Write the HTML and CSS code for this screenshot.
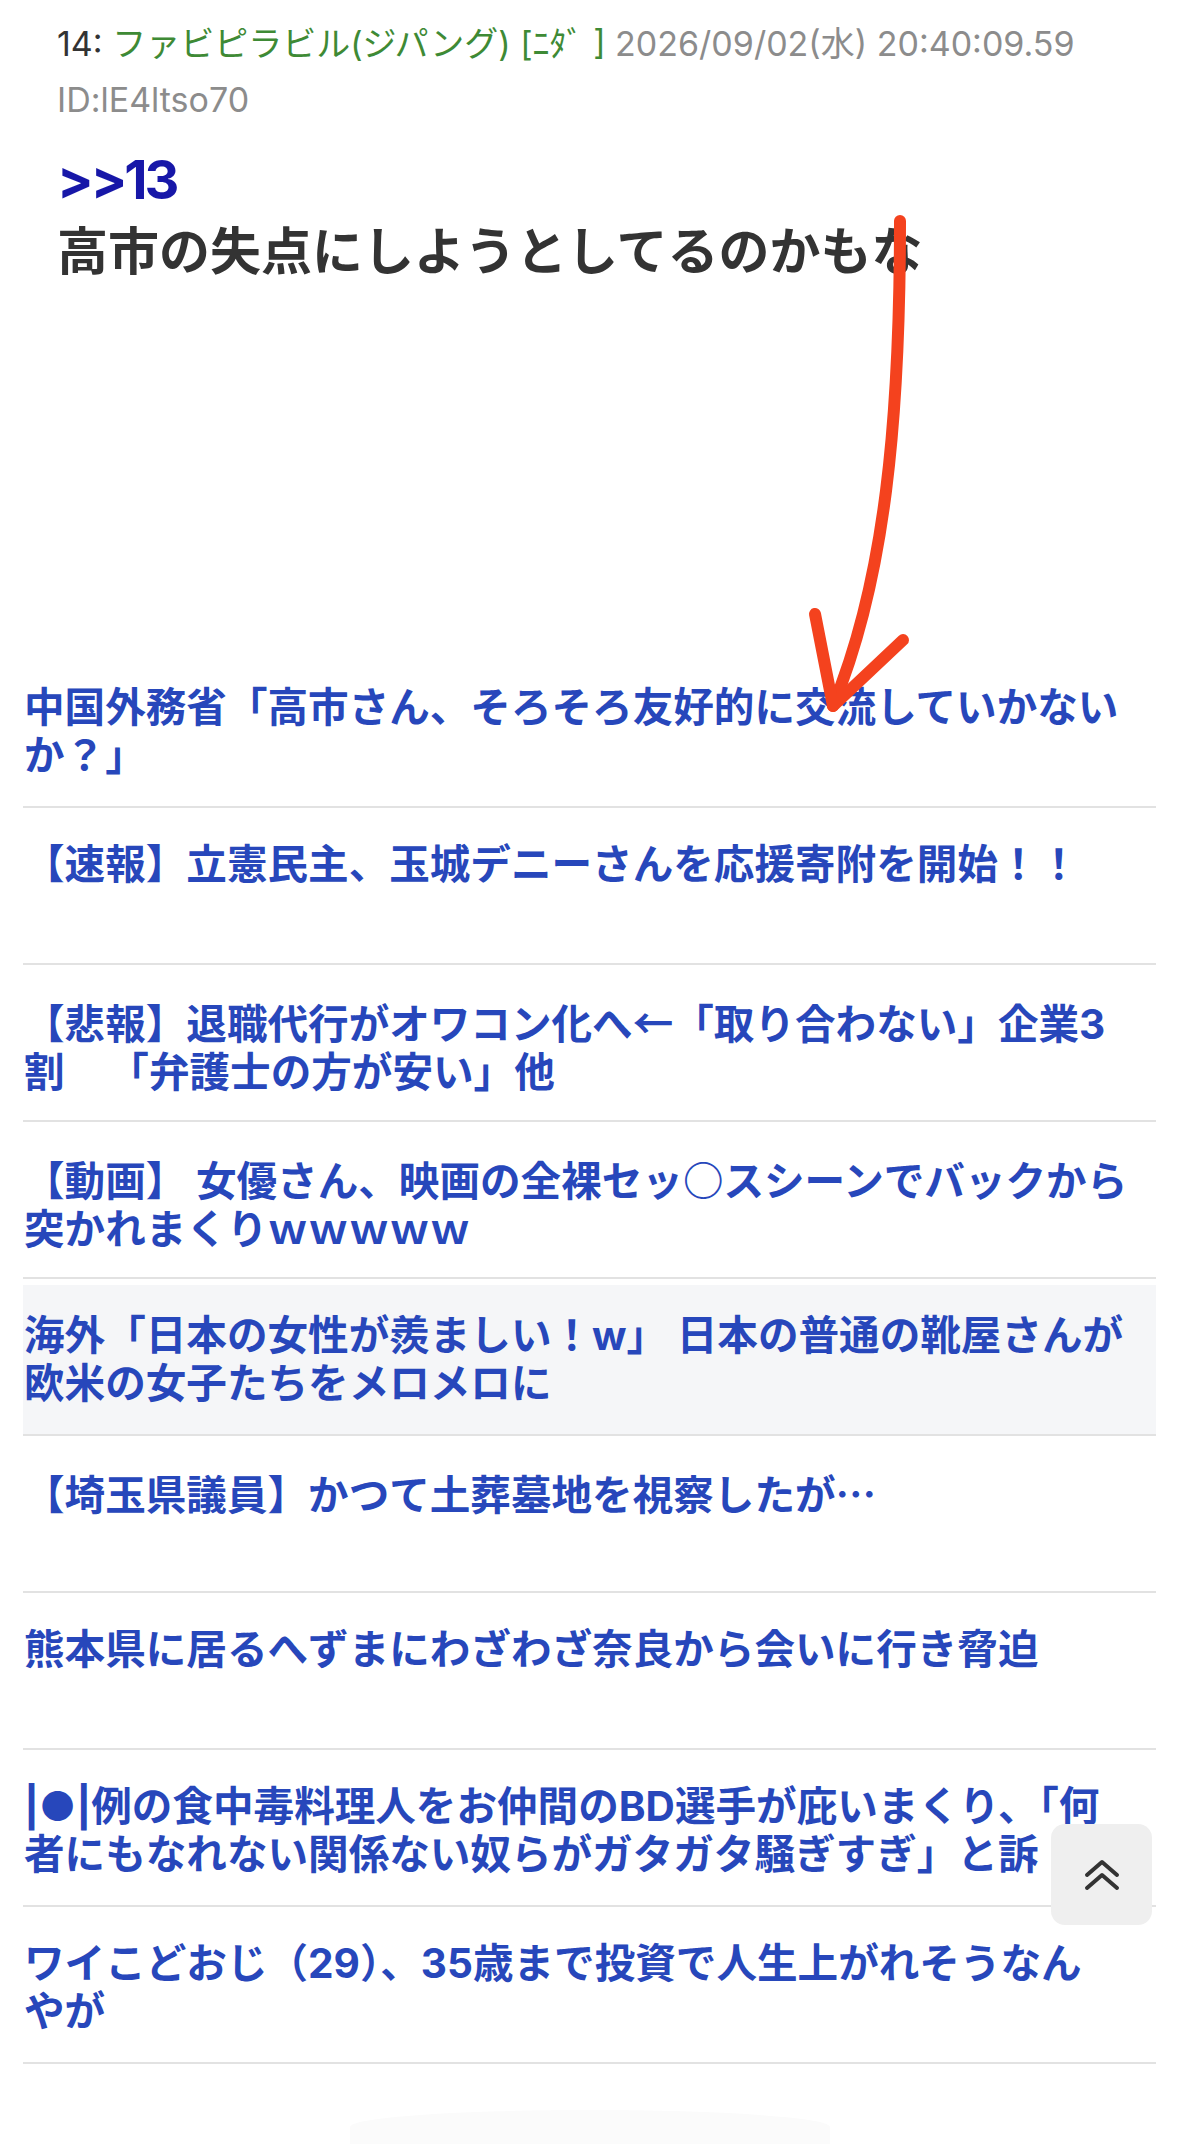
FILE: index.html
```html
<!DOCTYPE html>
<html lang="ja">
<head>
  <meta charset="UTF-8" />
  <meta name="viewport" content="width=device-width, initial-scale=1.0" />
  <title>14: ファビピラビル(ジパング)</title>
  <link rel="stylesheet" href="styles.css">
</head>
<body>
<div id="page">
  <div class="post">
    <div class="post-head">
      <div class="meta">14: <span class="name">ファビピラビル(ジパング) [ﾆﾀﾞ ]</span> <span class="date">2026/09/02(水) 20:40:09.59</span></div>
      <div class="uid">ID:lE4ltso70</div>
    </div>
    <div class="post-body">
      <a class="anchor" href="#">&gt;&gt;13</a><br>
      高市の失点にしようとしてるのかもな
    </div>
    <div class="ad-space"></div>
  </div>

  <ul class="links">
    <li class="item"><a href="#">中国外務省「高市さん、そろそろ友好的に交流していかない<br>か？」</a></li>
    <li class="item"><a href="#">【速報】立憲民主、玉城デニーさんを応援寄附を開始！！</a></li>
    <li class="item"><a href="#">【悲報】退職代行がオワコン化へ<span class="jp">←</span>「取り合わない」企業3<br>割　&#8202;「弁護士の方が安い」他</a></li>
    <li class="item"><a href="#">【動画】 女優さん、映画の全裸セッ<span class="jp">○</span>スシーンでバックから<br>突かれまくりｗｗｗｗｗ</a></li>
    <li class="item alt"><a href="#">海外「日本の女性が羨ましい！w」 日本の普通の靴屋さんが<br>欧米の女子たちをメロメロに</a></li>
    <li class="item"><a href="#">【埼玉県議員】かつて土葬墓地を視察したが<span class="jp">…</span></a></li>
    <li class="item"><a href="#">熊本県に居るへずまにわざわざ奈良から会いに行き脅迫</a></li>
    <li class="item"><a class="clamp" href="#">|●|例の食中毒料理人をお仲間のBD選手が庇いまくり、「何<br>者にもなれない関係ない奴らがガタガタ騒ぎすぎ」と訴</a></li>
    <li class="item"><a href="#">ワイこどおじ（29）、35歳まで投資で人生上がれそうなん<br>やが</a></li>
  </ul>
  <div class="page-end"></div>

  <!-- hand drawn annotation -->
  <svg class="scribble" width="1179" height="2144" viewBox="0 0 1179 2144">
    <path d="M900 221 C900 420 885 580 833 706" fill="none" stroke="#f4421e" stroke-width="12" stroke-linecap="round"/>
    <path d="M815 614 L833 706 L903 640" fill="none" stroke="#f4421e" stroke-width="12" stroke-linecap="round" stroke-linejoin="round"/>
  </svg>
</div>

<a id="toTop" href="#">
  <svg width="36" height="34" viewBox="0 0 36 34">
    <path d="M3 17 L18 4 L33 17 M3 30 L18 17 L33 30" fill="none" stroke="#333" stroke-width="4" stroke-linecap="round" stroke-linejoin="round"/>
  </svg>
</a>
</body>
</html>
```

FILE: styles.css
```css
* { box-sizing: border-box; margin: 0; padding: 0; }
html, body { width: 100%; background: #fff; }
body { font-family: Inter, "Noto Sans CJK JP", sans-serif; color: #333; }
a { text-decoration: none; }

#page { position: relative; padding: 0 23px; }

.post { padding: 16px 0 0 34px; }
.post-head { font-size: 34px; line-height: 56px; }
.meta { white-space: nowrap; color: #333; }
.meta .name { color: #3e8a35; }
.meta .date { color: #8c8c8c; }
.uid { color: #8c8c8c; }

.post-body {
  margin-top: 15px;
  font-family: "Noto Sans CJK JP", sans-serif;
  font-size: 51px; line-height: 69px; font-weight: bold;
  color: #333;
}
.anchor {
  font-family: Inter, "Noto Sans CJK JP", sans-serif;
  font-size: 54px; color: #1717a8;
  letter-spacing: -3px;
}
.ad-space { height: 368px; }

.links { list-style: none; }
.item {
  height: 157px;
  padding: 33px 0 0 1px;
  border-bottom: 2px solid #e2e2e2;
}
.item.alt {
  background: #f5f6f8;
  border-top: 6px solid #fff;
  padding-top: 27px;
}
.item a {
  display: block;
  font-size: 40.6px; line-height: 48px; font-weight: bold;
  color: #2747bb;
}
.item a.clamp {
  display: -webkit-box;
  -webkit-box-orient: vertical;
  -webkit-line-clamp: 2;
  overflow: hidden;
}
.jp { font-family: "Noto Sans CJK JP", sans-serif; }

.page-end {
  width: 480px; height: 34px;
  margin: 46px auto 0;
  border-radius: 50% 50% 0 0;
  background: #fbfbfb;
}

.scribble {
  position: absolute; top: 0; left: 0;
  pointer-events: none;
}

#toTop {
  position: fixed; right: 27px; top: 1824px;
  width: 101px; height: 101px;
  border-radius: 14px;
  background: #efefef;
  display: flex; align-items: center; justify-content: center;
}
```
